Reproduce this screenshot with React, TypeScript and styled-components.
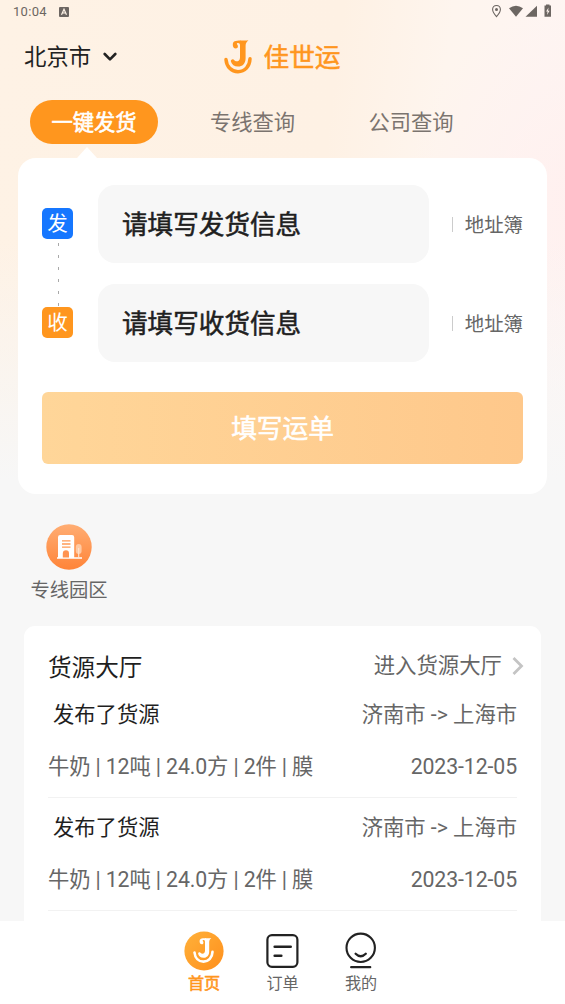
import React from 'react';
import styled, { createGlobalStyle, css } from 'styled-components';

const GlobalStyle = createGlobalStyle`
  * { box-sizing: border-box; }
  body {
    margin: 0;
    background: #f7f7f7;
    font-family: Roboto, "Noto Sans CJK SC", sans-serif;
    color: #1f1f1f;
  }
`;

const semibold = css`
  font-weight: 400;
  -webkit-text-stroke: 0.55px currentColor;
`;

const Screen = styled.div`
  width: 565px;
  height: 1004px;
  overflow: hidden;
  display: flex;
  flex-direction: column;
  background:
    linear-gradient(180deg, rgba(247, 247, 247, 0) 0, rgba(247, 247, 247, 0) 240px, #f7f7f7 480px),
    radial-gradient(ellipse 180px 200px at 585px 200px, #fff0ef 0%, rgba(255, 240, 239, 0) 100%),
    linear-gradient(97deg, #fef2e5 0%, #fef1e4 50%, #fef5ee 66%, #fef5f2 80%, #fff5f3 100%);
`;

const StatusBar = styled.div`
  height: 24px;
  flex: none;
  display: flex;
  align-items: center;
  padding: 0 13px 0 13px;
  color: #6c6662;
`;

const Clock = styled.span`
  font-size: 13px;
  line-height: 24px;
  letter-spacing: 0.3px;
  margin-right: 12px;
`;

const StatusIcons = styled.svg`
  margin-left: auto;
`;

const Header = styled.header`
  height: 66px;
  flex: none;
  display: grid;
  grid-template-columns: 1fr auto 1fr;
  align-items: center;
  padding: 0 24px;
`;

const City = styled.div`
  display: flex;
  align-items: center;
  gap: 12px;
  font-size: 22.4px;
  line-height: 30px;
  color: #222;
`;

const Brand = styled.div`
  display: flex;
  align-items: center;
  gap: 11px;
  font-size: 25.7px;
  line-height: 34px;
  color: #ff961e;
  ${semibold}
`;

const BrandName = styled.span`
  padding-top: 1px;
`;

const Tabs = styled.nav`
  height: 44px;
  flex: none;
  display: flex;
  margin: 10px 0 14px 30px;
  gap: 30.5px;
`;

const Tab = styled.div<{ $active?: boolean }>`
  position: relative;
  width: 128px;
  height: 44px;
  border-radius: 22px;
  font-size: 21.3px;
  line-height: 46px;
  text-align: center;
  color: #7b746f;
  ${(p) =>
    p.$active &&
    css`
      background: #ff961e;
      color: #fff;
      ${semibold}
      &::after {
        content: '';
        position: absolute;
        left: 47px;
        top: 47px;
        border: 10px solid transparent;
        border-top: 0;
        border-bottom: 11px solid #fff;
      }
    `}
`;

const ShipCard = styled.section`
  height: 336px;
  flex: none;
  margin: 0 18px;
  padding: 27px 24px 0;
  border-radius: 18px;
  background: #fff;
  display: flex;
  flex-direction: column;
`;

const AddressRow = styled.div`
  display: flex;
  align-items: center;
  height: 78px;
  margin-bottom: 21px;
`;

const Badge = styled.div<{ $color: string; $linked?: boolean }>`
  position: relative;
  width: 31px;
  height: 31px;
  border-radius: 5px;
  background: ${(p) => p.$color};
  color: #fff;
  font-size: 20.5px;
  line-height: 32px;
  text-align: center;
  margin: 0 25px 2px 0;
  ${(p) =>
    p.$linked &&
    css`
      &::after {
        content: '';
        position: absolute;
        left: 16px;
        top: 35px;
        width: 1px;
        height: 64px;
        background: repeating-linear-gradient(180deg, #a9a9a9 0 3px, transparent 3px 12px);
      }
    `}
`;

const AddressField = styled.div`
  width: 331px;
  height: 78px;
  border-radius: 17px;
  background: #f7f7f7;
  padding-left: 24px;
  font-size: 25.6px;
  line-height: 80px;
  ${semibold}
`;

const AddressBook = styled.div`
  display: flex;
  align-items: center;
  gap: 12px;
  margin-left: auto;
  font-size: 19.4px;
  line-height: 26px;
  padding-top: 3px;
  color: #666;
  &::before {
    content: '';
    width: 1px;
    height: 15px;
    margin-top: -3px;
    background: #ccc;
  }
`;

const SubmitButton = styled.button`
  height: 72px;
  margin-top: 9px;
  border: 0;
  padding: 1px 0 0;
  border-radius: 6px;
  background: linear-gradient(90deg, #ffd699, #fec88b);
  color: #fff;
  font: 400 25.7px/72px Roboto, "Noto Sans CJK SC", sans-serif;
  ${semibold}
`;

const Shortcuts = styled.div`
  height: 132px;
  flex: none;
  padding: 30px 0 0 24px;
`;

const Shortcut = styled.div`
  width: 90px;
  display: flex;
  flex-direction: column;
  align-items: center;
  font-size: 19.3px;
  line-height: 26px;
  color: #666;
  gap: 8px;
`;

const CargoCard = styled.section`
  flex: 1;
  min-height: 0;
  overflow: hidden;
  margin: 0 24px;
  padding: 0 24px;
  background: #fff;
  border-radius: 11px 11px 0 0;
`;

const CargoHeader = styled.div`
  display: flex;
  align-items: center;
  justify-content: space-between;
  height: 59px;
  padding-top: 24px;
  margin-right: -7px;
`;

const CargoTitle = styled.h2`
  margin: 0;
  font-size: 23.6px;
  line-height: 32px;
  font-weight: 400;
`;

const CargoMore = styled.div`
  display: flex;
  align-items: center;
  gap: 9px;
  font-size: 21.4px;
  line-height: 28px;
  color: #666;
  margin-top: -3px;
`;

const CargoItem = styled.article`
  height: 113px;
  border-bottom: 1px solid #f2f2f2;
  font-size: 21.3px;
  line-height: 28px;
  color: #666;
  padding-top: 16px;
`;

const CargoLine = styled.div<{ $tight?: boolean }>`
  display: flex;
  justify-content: space-between;
  height: 28px;
  margin-bottom: 23.5px;
  letter-spacing: ${(p) => (p.$tight ? '-0.12px' : '0')};
`;

const Poster = styled.span`
  color: #1f1f1f;
  padding-left: 5px;
`;

const BottomNav = styled.nav`
  height: 83px;
  flex: none;
  background: #fff;
  display: flex;
  justify-content: center;
  padding-top: 10px;
`;

const NavItem = styled.div<{ $active?: boolean }>`
  width: 78.5px;
  display: flex;
  flex-direction: column;
  align-items: center;
  font-size: 16.1px;
  line-height: 22px;
  gap: 2px;
  color: ${(p) => (p.$active ? '#ff961e' : '#666')};
  ${(p) => p.$active && semibold}
`;

const BrandMark = ({ size, color }: { size: number; color: string }) => (
  <svg width={size} height={(size * 34) / 28} viewBox="0 0 28 34" fill="none">
    <path
      d="M10.6 1.3 C13 .2 20 .9 24.4 .3 C22.6 2 21.6 3.2 21.6 6 V18.2 C21.6 23.6 18.4 26.6 14 26.6 C10.4 26.6 7.7 24.7 6.9 21.6 C6.4 19.4 9.2 18.4 10.4 20.2 C11.6 22 16 21.8 16 17.4 V5.2 C16 3.4 15 2.8 13.6 3 C12.8 3.2 12.6 4 13.2 4.6 C14.2 5.6 14.4 8.6 11.8 8.6 C9.8 8.6 8.8 6.9 8.8 5 C8.8 3 9.4 1.9 10.6 1.3Z"
      fill={color}
    />
    <path d="M2 19.6 C2.6 26.8 7.4 31.7 14 31.7 C20.8 31.7 25.7 26.6 26 18.8" stroke={color} strokeWidth="3.5" strokeLinecap="round" />
  </svg>
);

const SmallAppIcon = () => (
  <svg width="10" height="10" viewBox="0 0 10 10">
    <rect width="10" height="10" rx="1" fill="#6c6662" />
    <path d="M2.5 7.8 L5 2.3 L7.5 7.8 M3.5 6 H6.5" stroke="#fff4e8" strokeWidth="1.2" fill="none" />
  </svg>
);

const SystemIcons = () => (
  <StatusIcons width="62" height="16" viewBox="0 0 62 16">
    <path d="M6.5 1.5 C4 1.5 2.6 3.3 2.6 5.5 C2.6 8.3 6.5 12.6 6.5 12.6 S10.4 8.3 10.4 5.5 C10.4 3.3 9 1.5 6.5 1.5Z" fill="none" stroke="#6c6662" strokeWidth="1.1" />
    <circle cx="6.5" cy="5.5" r="1.5" fill="#6c6662" />
    <path d="M19 4.2 Q26 -.9 33 4.2 L26 12.7Z" fill="#6c6662" />
    <path d="M47 1.8 V12.8 H35.5Z" fill="#6c6662" />
    <path d="M56 .4 H59.5 V1.6 H61 V12.8 H54.5 V1.6 H56Z" fill="#6c6662" />
    <path d="M58.5 3.4 L56.1 7.6 H57.6 L57 11.1 L59.6 6.8 H58.1Z" fill="#fff4f0" />
  </StatusIcons>
);

const ParkIcon = () => (
  <svg width="46" height="46" viewBox="0 0 46 46">
    <defs>
      <linearGradient id="park" x1="0" y1="0" x2="0" y2="1">
        <stop stopColor="#ffad73" />
        <stop offset="1" stopColor="#ff8438" />
      </linearGradient>
    </defs>
    <circle cx="23" cy="23" r="22.7" fill="url(#park)" />
    <path d="M12 33.2 V13.2 Q12 11 14.2 11 H26 Q28.2 11 28.2 13.2 V33.2 H36 V34.7 H11 V33.2Z" fill="#fff" />
    <path d="M16 16.8 H24.5 M16 20 H24.5 M16 23.2 H24.5" stroke="#ff9b57" strokeWidth="1.3" />
    <path d="M16.8 33.4 V29.5 Q16.8 26.3 20 26.3 Q23 26.3 23 29.5 V33.4Z" fill="#ff9350" />
    <rect x="29.8" y="20" width="5.8" height="10" rx="2.9" fill="#ffc9a2" />
    <path d="M32.7 24 V34" stroke="#ffe4d0" strokeWidth="1.1" />
  </svg>
);

const HomeIcon = () => (
  <svg width="40" height="40" viewBox="0 0 40 40">
    <defs>
      <linearGradient id="home" x1="0" y1="0" x2="1" y2="1">
        <stop stopColor="#ffb13a" />
        <stop offset="1" stopColor="#ff8f1c" />
      </linearGradient>
    </defs>
    <circle cx="20" cy="20" r="19.6" fill="url(#home)" />
    <g transform="translate(9 6.8)">
      <BrandMark size={21} color="#fff" />
    </g>
  </svg>
);

const OrderIcon = () => (
  <svg width="40" height="40" viewBox="0 0 40 40" fill="none" stroke="#222" strokeWidth="2.2" strokeLinecap="round">
    <rect x="4.4" y="4.2" width="30" height="31.6" rx="4.5" />
    <path d="M11.7 15.7 H27.7 M11.7 24.7 H18.3" strokeWidth="2.6" />
  </svg>
);

const ProfileIcon = () => (
  <svg width="40" height="40" viewBox="0 0 40 40" fill="none" stroke="#222" strokeWidth="2.1" strokeLinecap="round">
    <circle cx="19.7" cy="16.8" r="14.2" />
    <path d="M14.6 22.7 Q19.7 27.8 24.8 22.7 M10.2 36.2 H29.2" strokeWidth="2.3" />
  </svg>
);

const addresses = [
  { badge: '发', color: '#1677ff', text: '请填写发货信息' },
  { badge: '收', color: '#ff961e', text: '请填写收货信息' },
];

const cargo = [
  { id: 1, route: '济南市 -> 上海市', detail: '牛奶 | 12吨 | 24.0方 | 2件 | 膜', date: '2023-12-05' },
  { id: 2, route: '济南市 -> 上海市', detail: '牛奶 | 12吨 | 24.0方 | 2件 | 膜', date: '2023-12-05' },
];

export default function App() {
  return (
    <>
      <GlobalStyle />
      <Screen>
        <StatusBar>
          <Clock>10:04</Clock>
          <SmallAppIcon />
          <SystemIcons />
        </StatusBar>
        <Header>
          <City>
            北京市
            <svg width="14" height="10" viewBox="0 0 14 10" fill="none">
              <path d="M1.7 2 L7 7.3 L12.3 2" stroke="#222" strokeWidth="2.6" strokeLinecap="round" strokeLinejoin="round" />
            </svg>
          </City>
          <Brand>
            <BrandMark size={28} color="#ff961e" />
            <BrandName>佳世运</BrandName>
          </Brand>
        </Header>
        <Tabs>
          <Tab $active>一键发货</Tab>
          <Tab>专线查询</Tab>
          <Tab>公司查询</Tab>
        </Tabs>
        <ShipCard>
          {addresses.map((a, i) => (
            <AddressRow key={a.badge}>
              <Badge $color={a.color} $linked={i === 0}>{a.badge}</Badge>
              <AddressField>{a.text}</AddressField>
              <AddressBook>地址簿</AddressBook>
            </AddressRow>
          ))}
          <SubmitButton>填写运单</SubmitButton>
        </ShipCard>
        <Shortcuts>
          <Shortcut>
            <ParkIcon />
            专线园区
          </Shortcut>
        </Shortcuts>
        <CargoCard>
          <CargoHeader>
            <CargoTitle>货源大厅</CargoTitle>
            <CargoMore>
              进入货源大厅
              <svg width="13" height="20" viewBox="0 0 13 20" fill="none">
                <path d="M2.5 2 L10.5 10 L2.5 18" stroke="#c4c4c4" strokeWidth="2.8" />
              </svg>
            </CargoMore>
          </CargoHeader>
          {cargo.map((c) => (
            <CargoItem key={c.id}>
              <CargoLine>
                <Poster>发布了货源</Poster>
                <span>{c.route}</span>
              </CargoLine>
              <CargoLine $tight>
                <span>{c.detail}</span>
                <span>{c.date}</span>
              </CargoLine>
            </CargoItem>
          ))}
        </CargoCard>
        <BottomNav>
          <NavItem $active>
            <HomeIcon />
            首页
          </NavItem>
          <NavItem>
            <OrderIcon />
            订单
          </NavItem>
          <NavItem>
            <ProfileIcon />
            我的
          </NavItem>
        </BottomNav>
      </Screen>
    </>
  );
}
